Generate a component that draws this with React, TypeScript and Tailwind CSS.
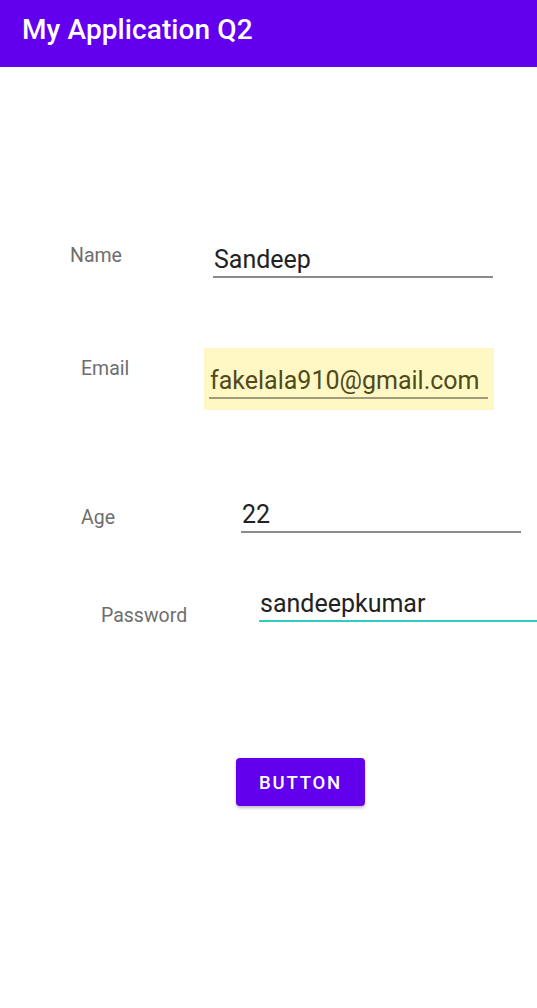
const font = { fontFamily: "Roboto, 'Liberation Sans', sans-serif" };

const Field = ({
  value,
  line = "border-[#8a8a8a]",
  color = "text-[#222222]",
  width = "w-[280px]",
}: {
  value: string;
  line?: string;
  color?: string;
  width?: string;
}) => (
  <div className={`${width} shrink-0`}>
    <div className={`h-[32px] leading-[32px] text-[25px] ${color} pl-[1px] whitespace-nowrap`}>
      {value}
    </div>
    <div className={`border-b-2 ${line}`} />
  </div>
);

const App = () => {
  return (
    <div className="w-[537px] h-[1008px] bg-white overflow-hidden" style={font}>
      {/* Top app bar */}
      <div className="h-[67px] bg-[#6200ee] flex items-center pl-[22px]">
        <span className="text-white text-[28px] font-medium tracking-[0.1px] -mt-[7px]">
          My Application Q2
        </span>
      </div>

      {/* Name */}
      <div className="flex mt-[177px]">
        <div className="pl-[70px] w-[213px] mt-[1px] leading-[22px] text-[19.5px] text-[#6e6e6e]">
          Name
        </div>
        <Field value="Sandeep" />
      </div>

      {/* Email */}
      <div className="flex mt-[70px]">
        <div className="pl-[81px] w-[204px] mt-[10px] leading-[22px] text-[19.5px] text-[#6e6e6e]">
          Email
        </div>
        <div className="w-[290px] h-[62px] bg-[#fff8c4] pl-[5px] pr-[6px] pt-[17px]">
          <Field
            value="fakelala910@gmail.com"
            width="w-full"
            color="text-[#4f4a1c]"
            line="border-[#a09c7a]"
          />
        </div>
      </div>

      {/* Age */}
      <div className="flex mt-[89px]">
        <div className="pl-[81px] w-[241px] mt-[8px] leading-[22px] text-[19.5px] text-[#6e6e6e]">
          Age
        </div>
        <Field value="22" />
      </div>

      {/* Password */}
      <div className="flex mt-[55px]">
        <div className="pl-[101px] w-[259px] shrink-0 mt-[17px] leading-[22px] text-[19.5px] text-[#6e6e6e]">
          Password
        </div>
        <Field value="sandeepkumar" line="border-[#2ccfc0]" />
      </div>

      {/* Button */}
      <div className="mt-[131px] pl-[236px]">
        <button className="w-[129px] h-[48px] pt-[4px] rounded-[4px] bg-[#6200ee] text-white text-[18.5px] font-medium tracking-[1.8px] shadow-[0_2px_3px_rgba(0,0,0,0.25)]">
          BUTTON
        </button>
      </div>
    </div>
  );
};

export default App;
